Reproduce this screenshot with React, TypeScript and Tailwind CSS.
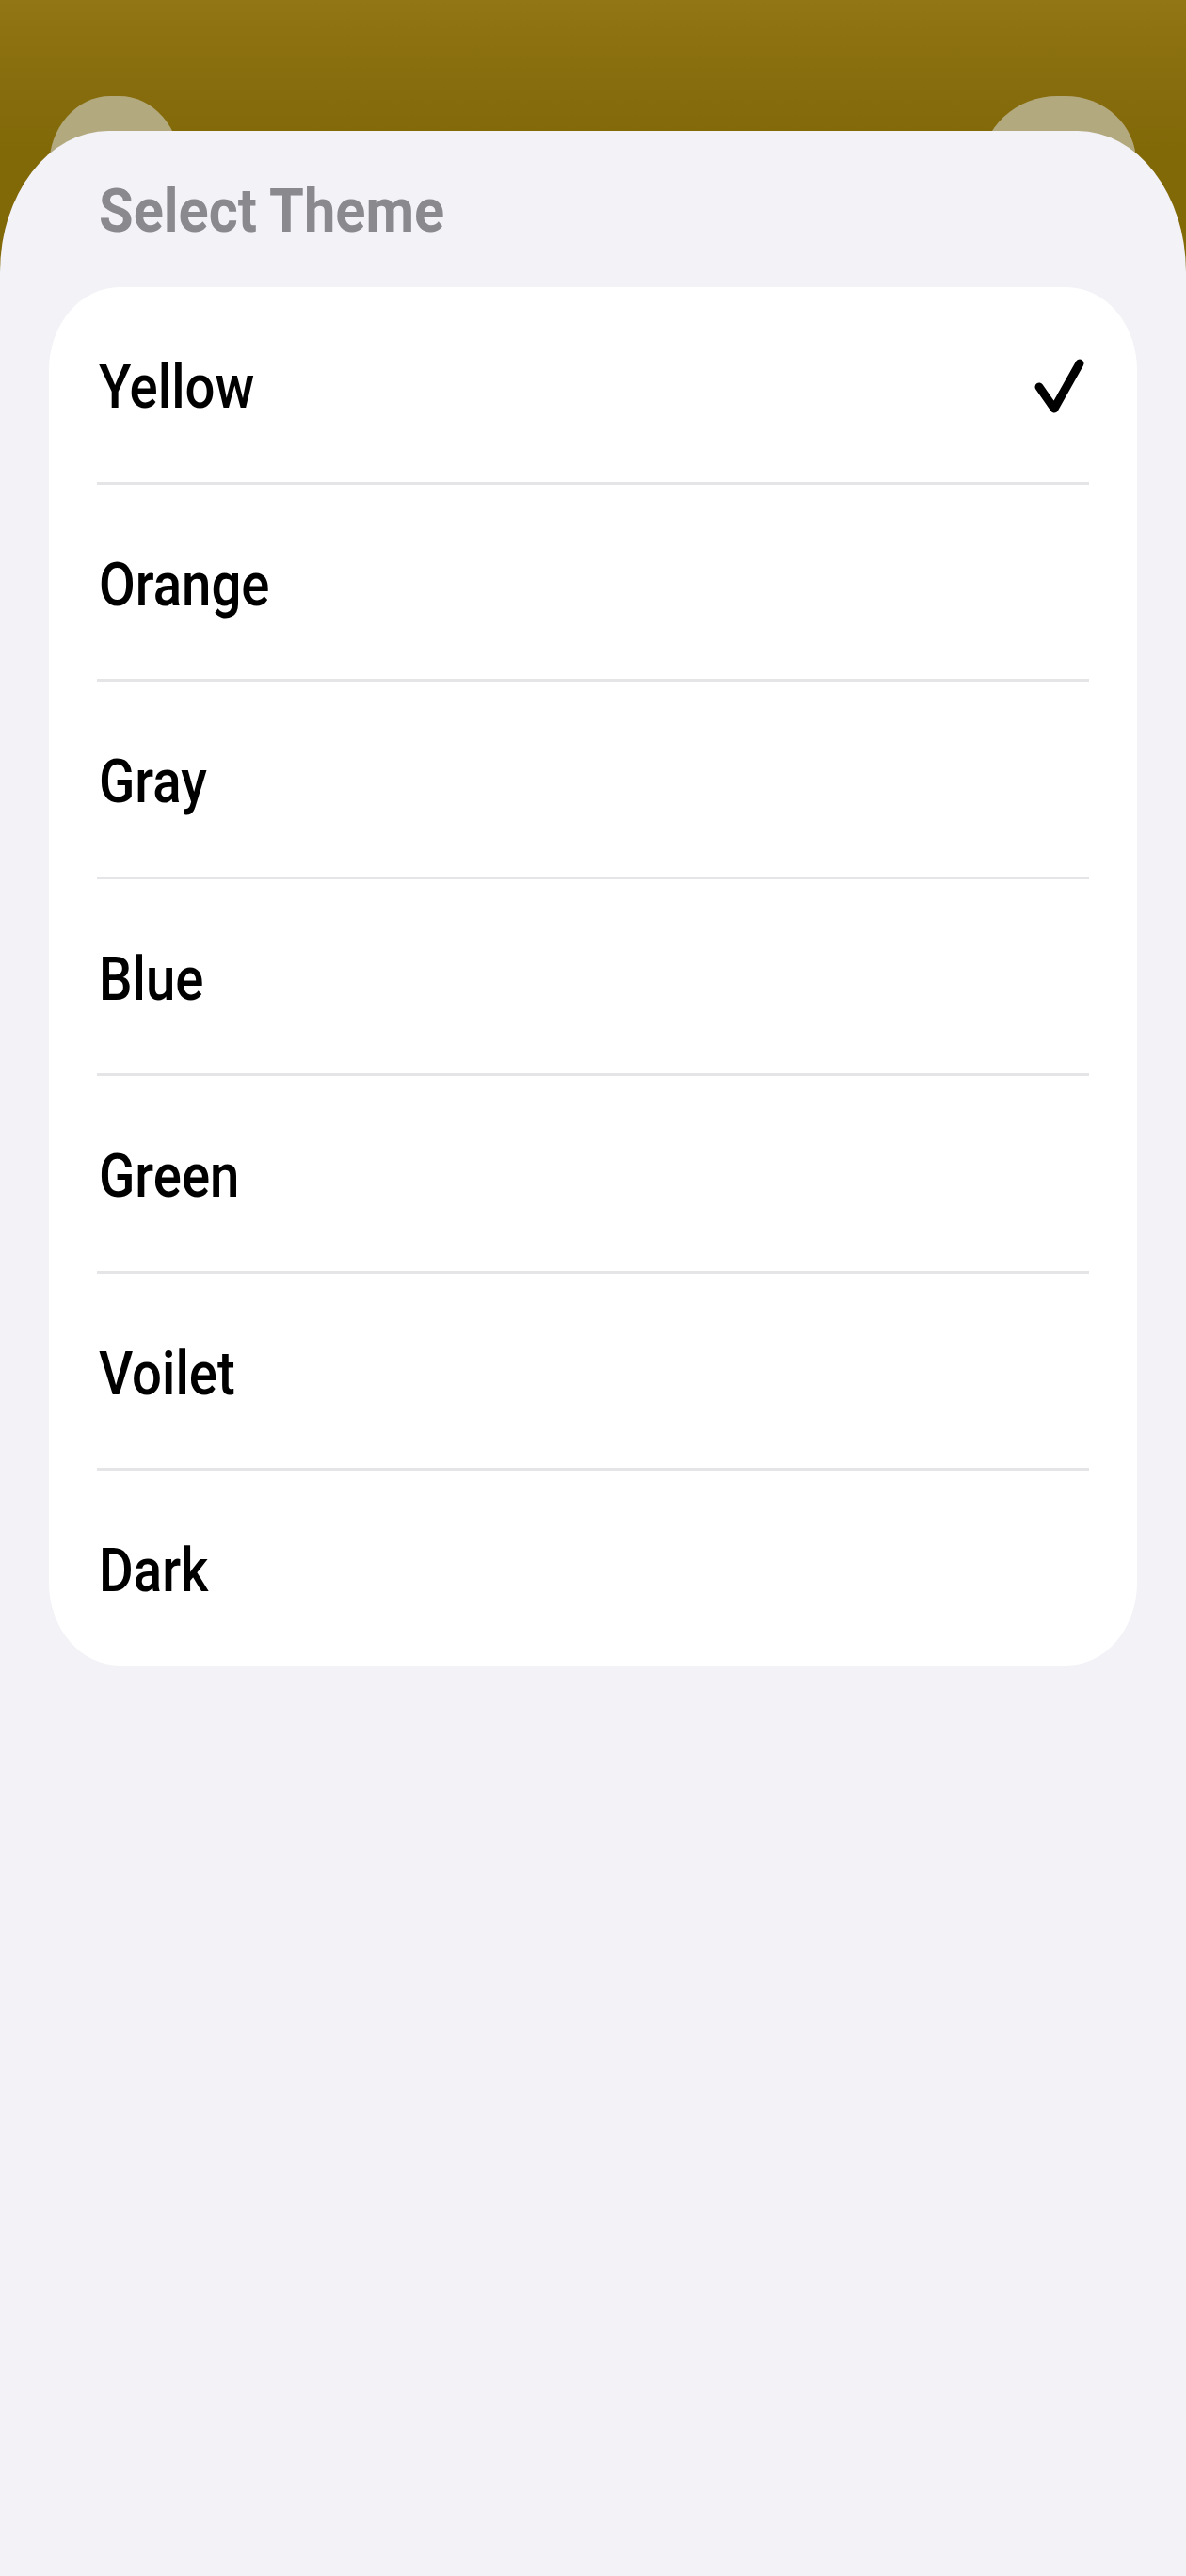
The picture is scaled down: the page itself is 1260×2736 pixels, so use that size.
import React from "react";

const themes = ["Yellow", "Orange", "Gray", "Blue", "Green", "Voilet", "Dark"];

function Check() {
  return (
    <svg width="70" height="70" viewBox="0 0 70 70" fill="none" className="mt-[6px]">
      <path
        d="M14 35 L30 58 L57 10"
        stroke="#000"
        strokeWidth="9"
        strokeLinecap="round"
        strokeLinejoin="round"
      />
    </svg>
  );
}

export default function App() {
  return (
    <div
      className="relative w-[1260px] h-[2736px] overflow-hidden bg-[linear-gradient(180deg,#927515_0px,#866c0c_100px,#826908_160px)]"
      style={{ fontFamily: "Roboto, 'Noto Sans', sans-serif" }}
    >
      <div className="absolute left-[52px] top-[102px] w-[140px] h-[120px] rounded-tl-[65px_75px] rounded-tr-[65px_75px] bg-[#b3a97e]" />
      <div className="absolute left-[1043px] top-[102px] w-[164px] h-[120px] rounded-tl-[80px_75px] rounded-tr-[75px_70px] bg-[#b3a97e]" />

      <div className="relative mt-[139px] h-[2597px] bg-[#f2f2f7] rounded-tl-[115px_150px] rounded-tr-[115px_150px] pt-[54px]">
        <div className="pl-[105px] h-[64px] text-[64px] leading-[64px] font-bold text-[#8a8a8e]">
          <span className="inline-block origin-left scale-x-[0.93] whitespace-nowrap">
            Select Theme
          </span>
        </div>

        <div className="mx-[52px] mt-[48px] bg-white rounded-[75px_/_88px] overflow-hidden">
          {themes.map((t, i) => (
            <div key={t}>
              <div className="h-[206.5px] flex items-center justify-between pl-[53px] pr-[48px]">
                <span className="inline-block mt-[8px] origin-left scale-x-[0.88] whitespace-nowrap text-[64px] leading-[64px] font-medium text-black">
                  {t}
                </span>
                {i === 0 && <Check />}
              </div>
              {i < themes.length - 1 && (
                <div className="mx-[51px] h-[3px] bg-[#e5e5e7]" />
              )}
            </div>
          ))}
        </div>
      </div>
    </div>
  );
}
